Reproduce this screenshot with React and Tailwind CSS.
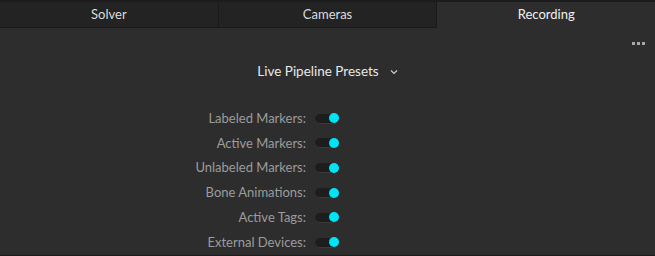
import React from "react";

const tabs = ["Solver", "Cameras", "Recording"];
const rows = [
  "Labeled Markers:",
  "Active Markers:",
  "Unlabeled Markers:",
  "Bone Animations:",
  "Active Tags:",
  "External Devices:",
];

const Toggle = () => (
  <div className="relative w-[24px] h-[10px] rounded-full bg-[#1d1d1d] border-b border-[#3a3a3a]">
    <div className="absolute right-[0px] top-[-0.5px] w-[10px] h-[10px] rounded-full bg-[#00e4f7]" />
  </div>
);

const App = () => {
  return (
    <div
      className="w-[655px] h-[256px] bg-[#2d2d2d] border-b border-[#1c1c1c] flex flex-col overflow-hidden"
      style={{ fontFamily: "Lato, 'Noto Sans', sans-serif" }}
    >
      <div className="flex h-[28px] border-t-[2px] border-[#1c1c1c]">
        {tabs.map((t, i) => (
          <div
            key={t}
            className={
              i === 2
                ? "flex-1 flex items-center justify-center text-[13px] text-[#f0f0f0] bg-[#2d2d2d]"
                : "flex-1 flex items-center justify-center text-[13px] text-[#dcdcdc] bg-[#232323] border-r border-b border-[#1a1a1a]"
            }
          >
            {t}
          </div>
        ))}
      </div>

      <div className="flex justify-end pr-[10px] pt-[14px] h-[30px]">
        <div className="flex gap-[2px]">
          <span className="w-[3px] h-[3px] bg-[#a8a8a8]" />
          <span className="w-[3px] h-[3px] bg-[#a8a8a8]" />
          <span className="w-[3px] h-[3px] bg-[#a8a8a8]" />
        </div>
      </div>

      <div className="flex items-center justify-center gap-[11px] h-[28px]">
        <span className="text-[13.5px] text-[#e8e8e8]">Live Pipeline Presets</span>
        <svg width="8" height="6" viewBox="0 0 8 6" className="mt-[1px]">
          <path d="M1 1.5 L4 4.5 L7 1.5" stroke="#cfcfcf" strokeWidth="1.2" fill="none" />
        </svg>
      </div>

      <div className="mt-[21px] flex flex-col">
        {rows.map((r) => (
          <div key={r} className="grid grid-cols-[306px_auto] gap-[9px] items-center h-[24.8px]">
            <span className="text-right text-[13px] text-[#9c9c9c]">{r}</span>
            <Toggle />
          </div>
        ))}
      </div>
    </div>
  );
};

export default App;
